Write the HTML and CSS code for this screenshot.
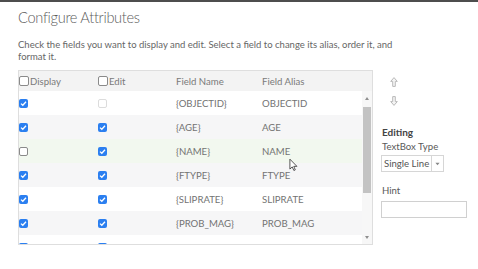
FILE: index.html
```html
<!DOCTYPE html>
<html>
<head>
<meta charset="utf-8">
<link rel="stylesheet" href="styles.css">
</head>
<body>
<div class="top-rule"></div>
<main class="page">
  <h1 class="title">Configure Attributes</h1>
  <p class="desc">Check the fields you want to display and edit. Select a field to change its alias, order it, and format it.</p>
  <div class="content">
    <div class="table">
      <div class="thead">
        <div class="c c1"><span class="cb"></span>Display</div>
        <div class="c c2"><span class="cb"></span>Edit</div>
        <div class="c c3">Field Name</div>
        <div class="c c4">Field Alias</div>
      </div>
      <div class="tbody">
        <div class="rows">
          <div class="row">
            <div class="c c1"><span class="cb on"><svg viewBox="0 0 9 9"><path d="M2 4.6 L3.8 6.3 L7 2.8"/></svg></span></div>
            <div class="c c2"><span class="cb off"></span></div>
            <div class="c c3">{OBJECTID}</div>
            <div class="c c4">OBJECTID</div>
          </div>
          <div class="row alt">
            <div class="c c1"><span class="cb on"><svg viewBox="0 0 9 9"><path d="M2 4.6 L3.8 6.3 L7 2.8"/></svg></span></div>
            <div class="c c2"><span class="cb on"><svg viewBox="0 0 9 9"><path d="M2 4.6 L3.8 6.3 L7 2.8"/></svg></span></div>
            <div class="c c3">{AGE}</div>
            <div class="c c4">AGE</div>
          </div>
          <div class="row hover">
            <div class="c c1"><span class="cb"></span></div>
            <div class="c c2"><span class="cb on"><svg viewBox="0 0 9 9"><path d="M2 4.6 L3.8 6.3 L7 2.8"/></svg></span></div>
            <div class="c c3">{NAME}</div>
            <div class="c c4">NAME</div>
          </div>
          <div class="row alt">
            <div class="c c1"><span class="cb on"><svg viewBox="0 0 9 9"><path d="M2 4.6 L3.8 6.3 L7 2.8"/></svg></span></div>
            <div class="c c2"><span class="cb on"><svg viewBox="0 0 9 9"><path d="M2 4.6 L3.8 6.3 L7 2.8"/></svg></span></div>
            <div class="c c3">{FTYPE}</div>
            <div class="c c4">FTYPE</div>
          </div>
          <div class="row">
            <div class="c c1"><span class="cb on"><svg viewBox="0 0 9 9"><path d="M2 4.6 L3.8 6.3 L7 2.8"/></svg></span></div>
            <div class="c c2"><span class="cb on"><svg viewBox="0 0 9 9"><path d="M2 4.6 L3.8 6.3 L7 2.8"/></svg></span></div>
            <div class="c c3">{SLIPRATE}</div>
            <div class="c c4">SLIPRATE</div>
          </div>
          <div class="row alt">
            <div class="c c1"><span class="cb on"><svg viewBox="0 0 9 9"><path d="M2 4.6 L3.8 6.3 L7 2.8"/></svg></span></div>
            <div class="c c2"><span class="cb on"><svg viewBox="0 0 9 9"><path d="M2 4.6 L3.8 6.3 L7 2.8"/></svg></span></div>
            <div class="c c3">{PROB_MAG}</div>
            <div class="c c4">PROB_MAG</div>
          </div>
          <div class="row">
            <div class="c c1"><span class="cb on"><svg viewBox="0 0 9 9"><path d="M2 4.6 L3.8 6.3 L7 2.8"/></svg></span></div>
            <div class="c c2"><span class="cb on"><svg viewBox="0 0 9 9"><path d="M2 4.6 L3.8 6.3 L7 2.8"/></svg></span></div>
            <div class="c c3"></div>
            <div class="c c4"></div>
          </div>
        </div>
        <div class="scrollbar">
          <div class="sb-arrow up"></div>
          <div class="sb-track"><div class="sb-thumb"></div></div>
          <div class="sb-arrow down"></div>
        </div>
      </div>
    </div>
    <aside class="side">
      <div class="order">
        <svg class="ord-icon" viewBox="0 0 8 10"><path d="M4 0.6 L7.3 4.4 H5.3 V9.4 H2.7 V4.4 H0.7 Z"/></svg>
        <svg class="ord-icon" viewBox="0 0 8 10"><path d="M4 9.4 L7.3 5.6 H5.3 V0.6 H2.7 V5.6 H0.7 Z"/></svg>
      </div>
      <h2 class="side-title">Editing</h2>
      <div class="label">TextBox Type</div>
      <div class="select"><span class="sel-text">Single Line</span><span class="sel-btn"><svg viewBox="0 0 6 4"><path d="M0.5 0.5 H5.5 L3 3.5 Z"/></svg></span></div>
      <div class="label hint">Hint</div>
      <div class="input"></div>
    </aside>
  </div>
  <svg class="cursor" viewBox="0 0 10 15"><path d="M1 1 V12 L3.6 9.6 L5.4 13.6 L7 12.9 L5.3 9 H8.8 Z"/></svg>
</main>
</body>
</html>
```
FILE: styles.css
```css
html, body {
  margin: 0;
  padding: 0;
  background: #fff;
}
body {
  font-family: Lato, "Noto Sans", "Liberation Sans", sans-serif;
  color: #666;
}
.top-rule {
  height: 2px;
  background: #4d4d4d;
}
.page {
  position: relative;
  padding: 5px 0 0 18px;
}
.title {
  margin: 0;
  font-size: 14.6px;
  line-height: 21px;
  font-weight: 300;
  letter-spacing: -0.3px;
  color: #5c5c5c;
}
.desc {
  margin: 11px 0 0 0;
  font-size: 9.5px;
  line-height: 12px;
  color: #666;
  width: 390px;
}
.content {
  display: flex;
  margin-top: 7px;
  gap: 8px;
}
.table {
  box-sizing: border-box;
  width: 355px;
  border: 1px solid #dedede;
  display: flex;
  flex-direction: column;
}
.thead {
  display: flex;
  height: 20px;
  align-items: center;
  background: #f3f3f3;
  font-size: 9.6px;
  color: #7a7a7a;
}
.tbody {
  display: flex;
  height: 153px;
  overflow: hidden;
}
.rows {
  flex: 1;
  display: flex;
  flex-direction: column;
}
.row {
  display: flex;
  flex: 0 0 24px;
  align-items: center;
  font-size: 9.6px;
  color: #737373;
}
.row.alt { background: #f6f6f7; }
.row.hover { background: #f2f8ef; }
.c {
  display: flex;
  align-items: center;
}
.c1 { width: 79px; }
.c2 { width: 78px; }
.c3 { width: 86px; }
.c4 { flex: 1; }
.cb {
  box-sizing: border-box;
  width: 9px;
  height: 9px;
  border: 1px solid #8a8a8a;
  border-radius: 2px;
  background: #fff;
  margin-right: 2px;
  display: inline-flex;
}
.thead .cb {
  width: 10px;
  height: 10px;
  margin-right: 1px;
}
.cb.off {
  border-color: #dcdcdc;
}
.cb.on {
  border: none;
  background: #2b7ff0;
}
.cb svg {
  width: 9px;
  height: 9px;
}
.cb svg path {
  fill: none;
  stroke: #fff;
  stroke-width: 1.3;
}
.scrollbar {
  width: 10px;
  display: flex;
  flex-direction: column;
  align-items: center;
  background: #f7f7f7;
}
.sb-arrow {
  width: 0;
  height: 0;
}
.sb-arrow.up {
  margin-top: 6px;
  margin-bottom: 6px;
  border-left: 2.5px solid transparent;
  border-right: 2.5px solid transparent;
  border-bottom: 3px solid #8f8f8f;
}
.sb-arrow.down {
  margin-top: 5px;
  margin-bottom: 5px;
  border-left: 2.5px solid transparent;
  border-right: 2.5px solid transparent;
  border-top: 3px solid #8f8f8f;
}
.sb-track {
  flex: 1;
  width: 8px;
}
.sb-thumb {
  height: 86px;
  background: #c3c3c3;
  margin-top: 1px;
}
.side {
  display: flex;
  flex-direction: column;
  width: 90px;
}
.order {
  display: flex;
  flex-direction: column;
  gap: 9px;
  margin-top: 7px;
  padding-left: 9px;
}
.ord-icon {
  width: 8px;
  height: 10px;
}
.ord-icon path {
  fill: #f4f4f4;
  stroke: #b9b9b9;
  stroke-width: 1;
}
.side-title {
  margin: 20px 0 0 1px;
  font-size: 10px;
  line-height: 12px;
  font-weight: 700;
  color: #444;
}
.label {
  margin: 3px 0 0 1px;
  font-size: 9.6px;
  line-height: 12px;
  color: #595959;
}
.label.hint {
  margin-top: 13px;
}
.select {
  box-sizing: border-box;
  margin-top: 2px;
  width: 63px;
  height: 17px;
  border: 1px solid #d6d6d6;
  display: flex;
  align-items: center;
  font-size: 9.6px;
  color: #555;
  background: #fff;
}
.sel-text {
  flex: 1;
  padding-left: 2px;
  white-space: nowrap;
}
.sel-btn {
  width: 11px;
  height: 100%;
  border-left: 1px solid #d6d6d6;
  display: flex;
  align-items: center;
  justify-content: center;
}
.sel-btn svg {
  width: 5px;
  height: 4px;
}
.sel-btn svg path {
  fill: #888;
}
.input {
  box-sizing: border-box;
  margin-top: 4px;
  width: 86px;
  height: 17px;
  border: 1px solid #d0d0d0;
  background: #fff;
}
.cursor {
  position: absolute;
  left: 289px;
  top: 156px;
  width: 9px;
  height: 14px;
}
.cursor path {
  fill: #fff;
  stroke: #333;
  stroke-width: 0.9;
  stroke-linejoin: round;
}
```
